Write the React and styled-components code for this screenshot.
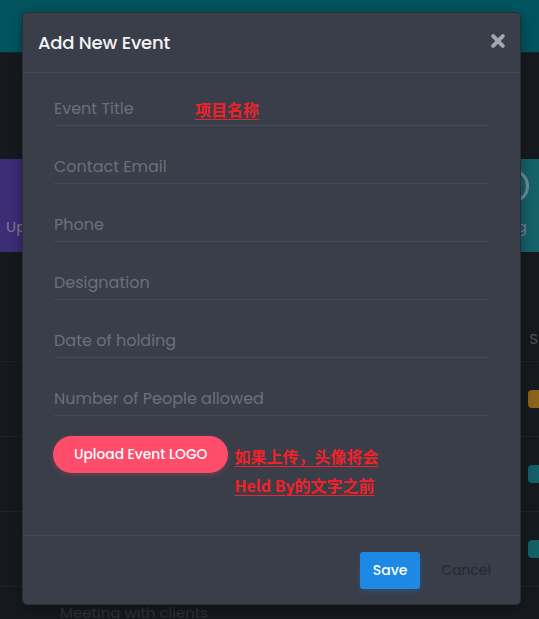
import React from "react";
import styled, { createGlobalStyle } from "styled-components";

const Global = createGlobalStyle`
  html, body { margin: 0; padding: 0; background: #161a1f; }
  body { font-family: "Poppins", "Open Sans", "Noto Sans", sans-serif; overflow: hidden; }
  * { box-sizing: border-box; }
`;

const Page = styled.div`
  position: relative;
  width: 539px;
  height: 619px;
  overflow: hidden;
  background: #161a1f;
`;

const TopBar = styled.div`
  height: 53px;
  background: #02555f;
  border-bottom: 1px solid #0f2a2e;
`;

const StatsRow = styled.div`
  display: flex;
  justify-content: space-between;
  margin-top: 106px;
  height: 93px;
`;

const StatCard = styled.div`
  width: ${(p) => p.$w}px;
  height: 93px;
  background: ${(p) => p.$bg};
  display: flex;
  flex-direction: column;
  justify-content: flex-end;
  align-items: ${(p) => (p.$right ? "flex-end" : "flex-start")};
  padding: 0 ${(p) => (p.$right ? "12px" : "6px")} 14px;
  color: #7c7f91;
  font-size: 15px;
  position: relative;
`;

const Ring = styled.div`
  position: absolute;
  right: 10px;
  top: 12px;
  width: 24px;
  height: 30px;
  border: 3px solid #6e8f94;
  border-radius: 50%;
`;

const Table = styled.div`
  margin-top: 69px;
`;

const HeadRow = styled.div`
  display: flex;
  justify-content: flex-end;
  height: 41px;
  align-items: center;
  padding-bottom: 5px;
  border-bottom: 1px solid #1f2429;
  color: #4f535b;
  font-size: 15px;
`;

const Row = styled.div`
  display: flex;
  justify-content: flex-end;
  align-items: center;
  height: 75px;
  border-bottom: 1px solid #1f2429;
`;

const Badge = styled.div`
  width: 20px;
  height: 18px;
  margin-right: -9px;
  border-radius: 4px;
  background: ${(p) => p.$bg};
`;

const BottomText = styled.div`
  padding-left: 60px;
  margin-top: 14px;
  color: #2f343a;
  font-size: 15px;
`;

const Modal = styled.div`
  position: absolute;
  top: 12px;
  left: 22px;
  width: 499px;
  background: #393e49;
  border: 1px solid #2a2e36;
  border-radius: 5px;
  box-shadow: 0 4px 16px rgba(0, 0, 0, 0.35);
`;

const Header = styled.div`
  height: 60px;
  display: flex;
  align-items: center;
  justify-content: space-between;
  padding: 0 14px 0 15px;
  border-bottom: 1px solid #454a55;
`;

const Title = styled.h4`
  margin: 0;
  color: #f2f3f5;
  font-size: 18px;
  font-weight: 500;
  letter-spacing: -0.2px;
`;

const Close = styled.button`
  background: none;
  border: none;
  padding: 0;
  width: 16px;
  height: 16px;
  display: flex;
  margin-top: -4px;
  cursor: pointer;
`;

const Body = styled.div`
  padding: 15px 31px 35px;
`;

const Field = styled.div`
  position: relative;
  height: 38px;
  margin-bottom: 20px;
  border-bottom: 1px solid #454a54;
`;

const Input = styled.input`
  width: 100%;
  height: 37px;
  background: transparent;
  border: none;
  outline: none;
  padding: 3px 0 0;
  font-family: inherit;
  font-size: 16px;
  color: #d0d2d6;
  &::placeholder { color: #6b707a; }
`;

const Note = styled.span`
  position: absolute;
  left: 141px;
  top: 11px;
  color: #f0212b;
  font-family: "Noto Sans CJK SC", sans-serif;
  font-weight: 700;
  font-size: 16px;
  line-height: 20px;
  text-decoration: underline;
  text-underline-offset: 3px;
  text-decoration-thickness: 1px;
`;

const UploadRow = styled.div`
  display: flex;
  align-items: flex-start;
  gap: 6px;
  margin-left: -1px;
`;

const UploadBtn = styled.button`
  height: 37px;
  padding: 0 21px;
  border: none;
  border-radius: 19px;
  background: #fd4d6b;
  color: #fff;
  font-family: inherit;
  font-size: 13.8px;
  font-weight: 500;
  box-shadow: 0 2px 6px rgba(253, 77, 107, 0.25);
  white-space: nowrap;
`;

const Annot = styled.div`
  margin-top: 6px;
  color: #f0212b;
  font-family: "Noto Sans CJK SC", sans-serif;
  font-weight: 700;
  font-size: 16px;
  line-height: 29px;
  & span {
    text-decoration: underline;
    text-underline-offset: 3px;
    text-decoration-thickness: 1px;
  }
`;

const Footer = styled.div`
  border-top: 1px solid #454a55;
  height: 69px;
  display: flex;
  justify-content: flex-end;
  align-items: flex-start;
  padding: 16px 17px 0 0;
  gap: 9px;
`;

const Btn = styled.button`
  height: 37px;
  padding: 0 12px;
  border: none;
  border-radius: 3px;
  font-family: inherit;
  font-size: 14px;
  font-weight: ${(p) => (p.$primary ? 500 : 400)};
  background: ${(p) => (p.$primary ? "#1e88e5" : "transparent")};
  color: ${(p) => (p.$primary ? "#ffffff" : "#25292f")};
  box-shadow: ${(p) => (p.$primary ? "0 2px 6px rgba(30,136,229,0.25)" : "none")};
  width: ${(p) => (p.$primary ? "60px" : "auto")};
`;

const fields = [
  "Event Title",
  "Contact Email",
  "Phone",
  "Designation",
  "Date of holding",
  "Number of People allowed",
];

export default function App() {
  return (
    <>
      <Global />
      <Page>
        <TopBar />
        <StatsRow>
          <StatCard $w={140} $bg="#3c2d77">
            Upcoming
          </StatCard>
          <StatCard $w={140} $bg="#15626b" $right>
            <Ring />
            Ongoing
          </StatCard>
        </StatsRow>
        <Table>
          <HeadRow>
            <span style={{ marginRight: "1px" }}>S</span>
          </HeadRow>
          <Row>
            <Badge $bg="#8c6419" />
          </Row>
          <Row>
            <Badge $bg="#156169" />
          </Row>
          <Row>
            <Badge $bg="#156169" />
          </Row>
          <BottomText>Meeting with clients</BottomText>
        </Table>

        <Modal>
          <Header>
            <Title>Add New Event</Title>
            <Close aria-label="close">
              <svg width="16" height="16" viewBox="0 0 16 16">
                <path
                  d="M3.2 3.2 L12.8 12.8 M12.8 3.2 L3.2 12.8"
                  stroke="#a3a6ab"
                  strokeWidth="4"
                  strokeLinecap="round"
                />
              </svg>
            </Close>
          </Header>
          <Body>
            {fields.map((f, i) => (
              <Field key={f}>
                <Input placeholder={f} />
                {i === 0 && <Note>项目名称</Note>}
              </Field>
            ))}
            <UploadRow>
              <UploadBtn>Upload Event LOGO</UploadBtn>
              <Annot>
                <span>如果上传，头像将会</span>
                <br />
                <span>Held By的文字之前</span>
              </Annot>
            </UploadRow>
          </Body>
          <Footer>
            <Btn $primary>Save</Btn>
            <Btn>Cancel</Btn>
          </Footer>
        </Modal>
      </Page>
    </>
  );
}
